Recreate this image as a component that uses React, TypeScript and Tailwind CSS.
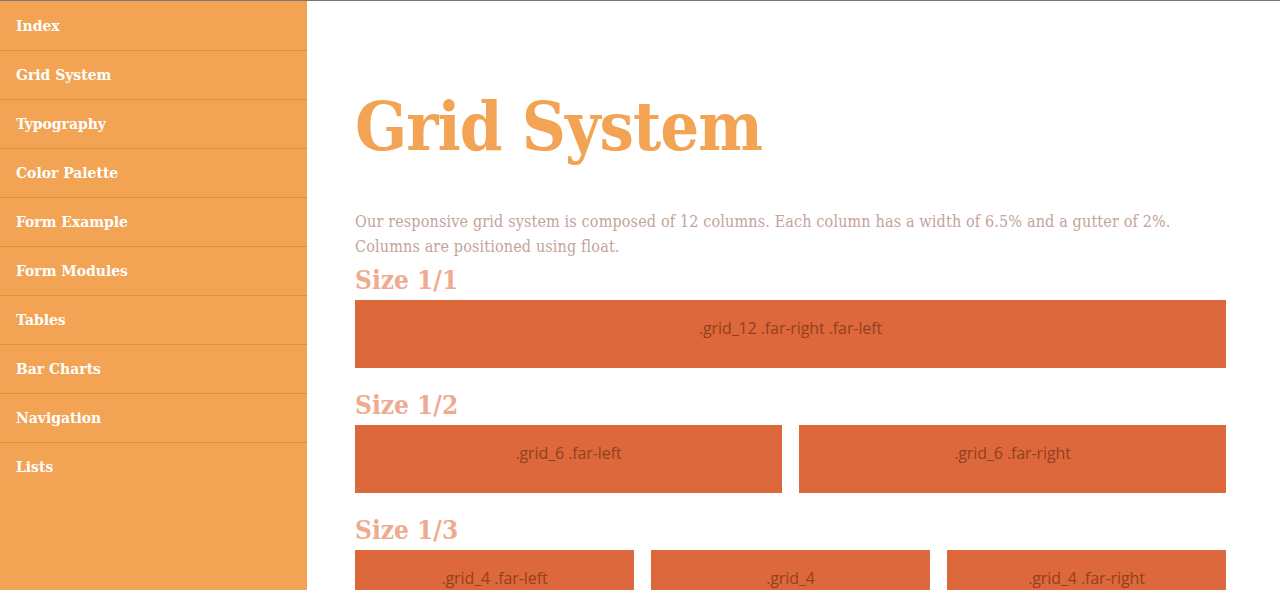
const navItems = [
  'Index',
  'Grid System',
  'Typography',
  'Color Palette',
  'Form Example',
  'Form Modules',
  'Tables',
  'Bar Charts',
  'Navigation',
  'Lists',
];

const sections = [
  { title: 'Size 1/1', cols: ['.grid_12 .far-right .far-left'] },
  { title: 'Size 1/2', cols: ['.grid_6 .far-left', '.grid_6 .far-right'] },
  { title: 'Size 1/3', cols: ['.grid_4 .far-left', '.grid_4', '.grid_4 .far-right'] },
];

const slab = "font-['DejaVu_Serif',serif] font-stretch-condensed";

function Sidebar() {
  return (
    <nav className={`w-[307px] shrink-0 bg-[#f2a354] ${slab}`}>
      <ul>
        {navItems.map((item, i) => (
          <li
            key={item}
            className={`pl-4 ${i === 0 ? 'h-[50px] pt-[13px]' : 'h-[49px] pt-[12px]'} ${
              i < navItems.length - 1 ? 'border-b border-dotted border-[#d9792a]' : ''
            }`}
          >
            <a href="#" className="text-[15.5px] font-bold leading-6 text-white">
              {item}
            </a>
          </li>
        ))}
      </ul>
    </nav>
  );
}

function Box({ label }: { label: string }) {
  return (
    <div className="h-[68px] flex-1 bg-[#dc683c] pt-[16px] text-center font-['Open_Sans',sans-serif] font-stretch-normal text-[16px] leading-6 text-[#93401f] tracking-[-0.1px]">
      {label}
    </div>
  );
}

export default function App() {
  return (
    <div className="flex h-[590px] overflow-hidden border-t border-[#777777] bg-white">
      <Sidebar />
      <main className={`flex-1 pl-12 pr-[54px] pt-[89px] ${slab}`}>
        <h1 className="text-[68px] font-bold leading-[72px] text-[#f2a354] tracking-[-1px]">Grid System</h1>
        <p className="mt-[47px] mb-[7px] text-[16px] leading-[25px] text-[#c4a39b] tracking-[0.15px]">
          Our responsive grid system is composed of 12 columns. Each column has a width of 6.5% and a gutter of 2%.
          <br />
          Columns are positioned using float.
        </p>
        {sections.map((s) => (
          <section key={s.title} className="mb-[23px]">
            <h3 className="h-[34px] text-[26px] font-bold leading-7 text-[#eeab90]">
              {s.title}
            </h3>
            <div className="flex gap-[17px]">
              {s.cols.map((c) => (
                <Box key={c} label={c} />
              ))}
            </div>
          </section>
        ))}
      </main>
    </div>
  );
}
